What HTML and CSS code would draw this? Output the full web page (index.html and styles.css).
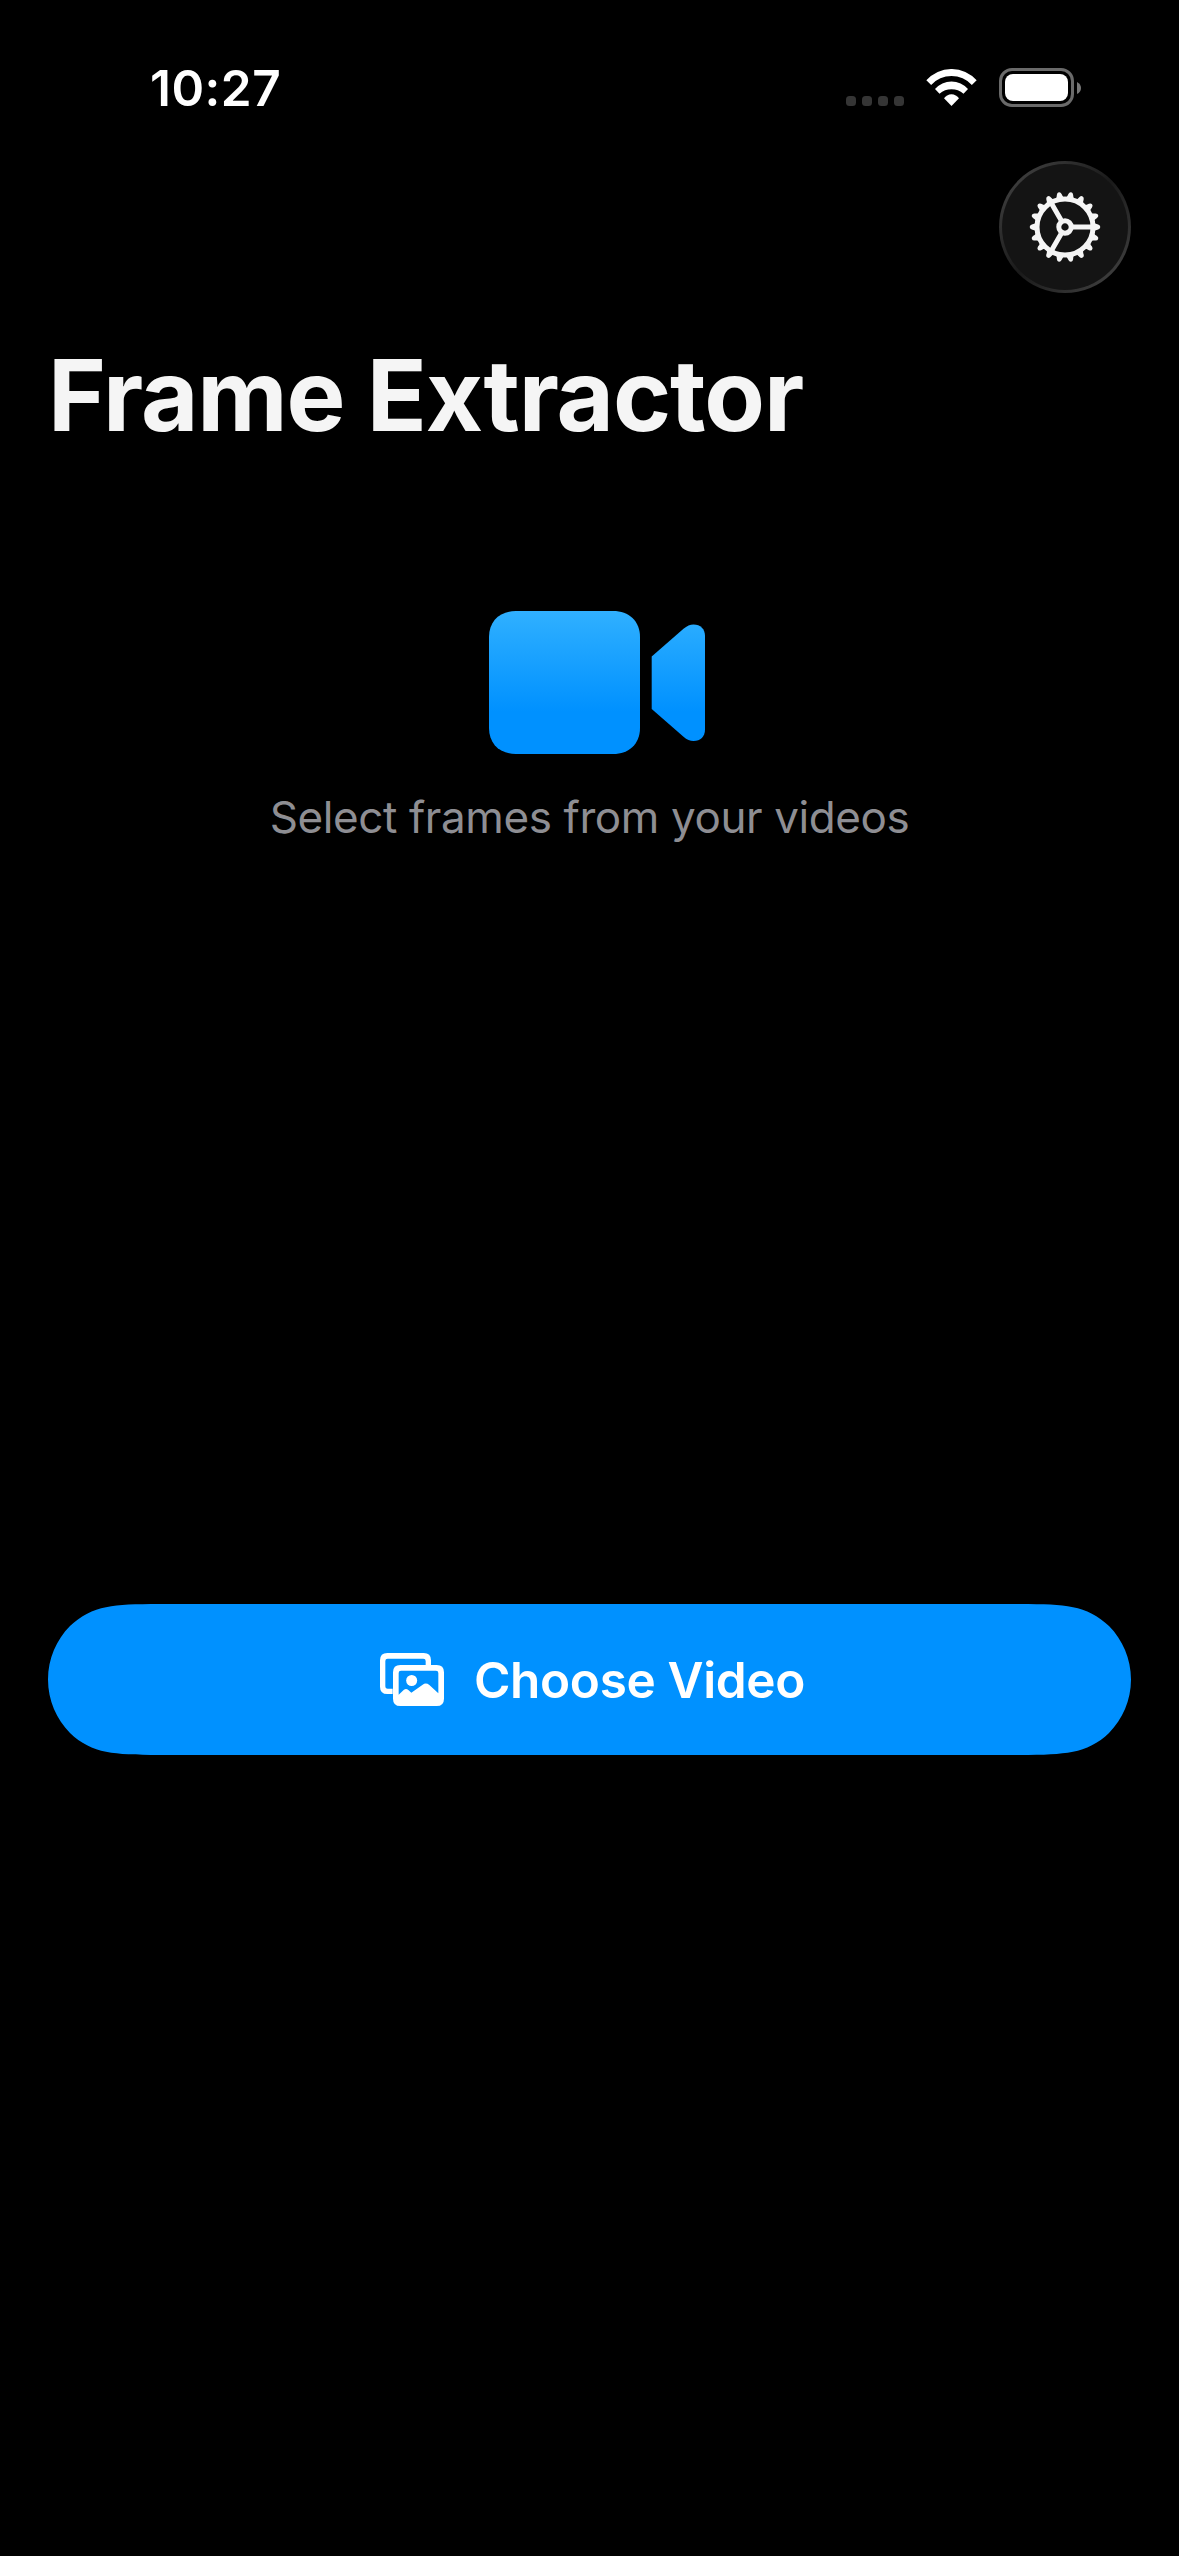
FILE: index.html
```html
<!DOCTYPE html>
<html lang="en">
<head>
<meta charset="utf-8">
<title>Frame Extractor</title>
<link rel="stylesheet" href="styles.css">
</head>
<body>
<div class="screen">
  <header class="status-bar">
    <span class="time">10:27</span>
    <div class="status-icons">
      <div class="signal"><i></i><i></i><i></i><i></i></div>
      <svg class="wifi" viewBox="289 57 151 111" fill="#fff">
        <path d="M289 91A100.8 100.8 0 0 1 440 91L425.500 105A82.400 82.400 0 0 0 303.500 105Z"/>
        <path d="M315 117A65.600 65.600 0 0 1 414 117L400.500 131A56 56 0 0 0 328.500 131Z"/>
        <path d="M342 145A27 27 0 0 1 387 145L364.500 168Z"/>
      </svg>
      <div class="battery"><div class="battery-shell"><div class="battery-level"></div></div><svg class="battery-cap" viewBox="0 0 4 12"><path d="M0 0Q4 2 4 6T0 12Z" fill="#777"/></svg></div>
    </div>
  </header>

  <nav class="toolbar">
    <button class="settings" aria-label="Settings">
      <svg class="gear" viewBox="-36 -36 72 72">
        <defs>
          <path id="tooth" d="M29 -4.200Q30.600 -2.900 33.200 -2.400Q35.300 -1.800 35.300 0T33.200 2.400Q30.600 2.900 29 4.200Z"/>
          <g id="teeth">
            <use href="#tooth"/><use href="#tooth" transform="rotate(20)"/><use href="#tooth" transform="rotate(40)"/>
            <use href="#tooth" transform="rotate(60)"/><use href="#tooth" transform="rotate(80)"/><use href="#tooth" transform="rotate(100)"/>
          </g>
        </defs>
        <g fill="#f5f5f5">
          <use href="#teeth"/><use href="#teeth" transform="rotate(120)"/><use href="#teeth" transform="rotate(240)"/>
        </g>
        <g fill="none" stroke="#f5f5f5" stroke-width="5">
          <circle r="28"/>
          <circle r="6.200"/>
          <path d="M8 0H27M-4 6.930L-13.500 23.380M-4 -6.930L-13.500 -23.380"/>
        </g>
      </svg>
    </button>
  </nav>

  <h1 class="title">Frame Extractor</h1>

  <main class="content">
    <section class="intro">
      <svg class="camera" viewBox="0 0 216 143">
        <defs>
          <linearGradient id="sky" gradientUnits="userSpaceOnUse" x1="0" y1="0" x2="0" y2="143">
            <stop offset="0" stop-color="#30b0ff"/><stop offset=".7" stop-color="#0091ff"/><stop offset="1" stop-color="#0091ff"/>
          </linearGradient>
        </defs>
        <g fill="url(#sky)">
          <path d="M27 0H124C140 0 151 10 151 26V117C151 133 140 143 124 143H27C11 143 0 133 0 117V26C0 10 11 0 27 0Z"/>
          <path d="M162.700 45.500L194.500 17.800Q199.500 13.500 204.500 13.500C211.500 13.500 216 18 216 25V118.500C216 125.500 211.500 130 204.500 130Q199.500 130 194.500 125.700L162.700 98Z"/>
        </g>
      </svg>
      <p class="hint">Select frames from your videos</p>
    </section>

    <button class="choose">
      <svg class="photos" viewBox="60 69 192 159">
        <path d="M101 192H82Q60 192 60 170V91Q60 69 82 69H191Q213 69 213 91V105H197V93Q197 86 190 86H83Q76 86 76 93V168Q76 176 83 176H98V192Z" fill="#fff"/>
        <path fill="#fff" fill-rule="evenodd" d="M121 105H230Q252 105 252 127V206Q252 228 230 228H121Q99 228 99 206V127Q99 105 121 105ZM123 122Q116 122 116 129V194L131 180Q138 174 145 180L154 188L188 164Q198 157 208 165L235 190V129Q235 122 228 122Z"/>
        <circle cx="155" cy="151.500" r="16.500" fill="#fff"/>
      </svg>
      <span>Choose Video</span>
    </button>
  </main>
</div>
</body>
</html>
```
FILE: styles.css
```css
* { box-sizing: border-box; }
body { margin: 0; background: #000; font-family: Inter, "Liberation Sans", sans-serif; }
svg { display: block; flex: none; }
button { border: 0; padding: 0; font: inherit; color: inherit; }

.screen { width: 1179px; height: 2556px; background: #000; overflow: hidden; }

.status-bar {
  display: flex; justify-content: space-between; align-items: flex-start;
  height: 161px; padding: 68px 98px 0 150px;
}
.time { color: #fff; font-size: 49.500px; font-weight: 600; line-height: 40px; letter-spacing: 0.500px; }
.status-icons { display: flex; height: 39px; }
.signal { display: flex; gap: 6px; margin: 28px 22px 0 0; }
.signal i { width: 10px; height: 10px; border-radius: 3.500px; background: #353535; }
.wifi { width: 51px; height: 37px; margin: 1px 22px 0 0; }
.battery { display: flex; align-items: center; gap: 3px; }
.battery-shell { width: 75px; height: 39px; padding: 3px; border: 3px solid #6a6a6a; border-radius: 13px; }
.battery-level { height: 27px; border-radius: 8px; background: #fff; }
.battery-cap { width: 4px; height: 12px; }

.toolbar { display: flex; justify-content: flex-end; padding-right: 48px; }
.settings {
  display: grid; place-items: center; width: 132px; height: 132px; border-radius: 50%;
  border: 3px solid transparent;
  background: linear-gradient(#141414, #141414) padding-box,
    linear-gradient(135deg, #404040 10%, #303030 25%, #1a1a1a 50%, #303030 75%, #404040 90%) border-box;
}
.gear { width: 72px; height: 72px; }

.title {
  margin: 42px 0 0 48px; color: #f5f5f5; font-size: 99px; font-weight: 700;
  line-height: 120px; letter-spacing: -1.100px; white-space: nowrap;
}

.content { display: flex; flex-direction: column; padding: 156px 48px 0; }
.intro { display: flex; flex-direction: column; align-items: center; height: 993px; }
.camera { width: 216px; height: 143px; margin-left: 15px; }
.hint { margin: 36px 0 0; color: #8e8e93; font-size: 44px; line-height: 54px; letter-spacing: -0.400px; white-space: nowrap; }

.choose {
  display: flex; align-items: center; height: 151px; padding-left: 332px; gap: 30px;
  background: #0091ff; color: #fff; font-size: 49.500px; font-weight: 600; letter-spacing: -0.350px; white-space: nowrap;
  clip-path: path("M0 75.5C0 54.6 8.5 35.7 22 22C32.6 11.8 45 5.500 58 3.200C72 .6 86 0 112 0H971C997 0 1011 .6 1025 3.200C1038 5.500 1050.400 11.800 1061 22C1074.500 35.700 1083 54.600 1083 75.500C1083 96.400 1074.500 115.300 1061 129C1050.400 139.200 1038 145.500 1025 147.800C1011 150.400 997 151 971 151H112C86 151 72 150.400 58 147.800C45 145.500 32.600 139.200 22 129C8.500 115.300 0 96.400 0 75.500Z");
}
.photos { width: 64px; height: 53px; }
```
